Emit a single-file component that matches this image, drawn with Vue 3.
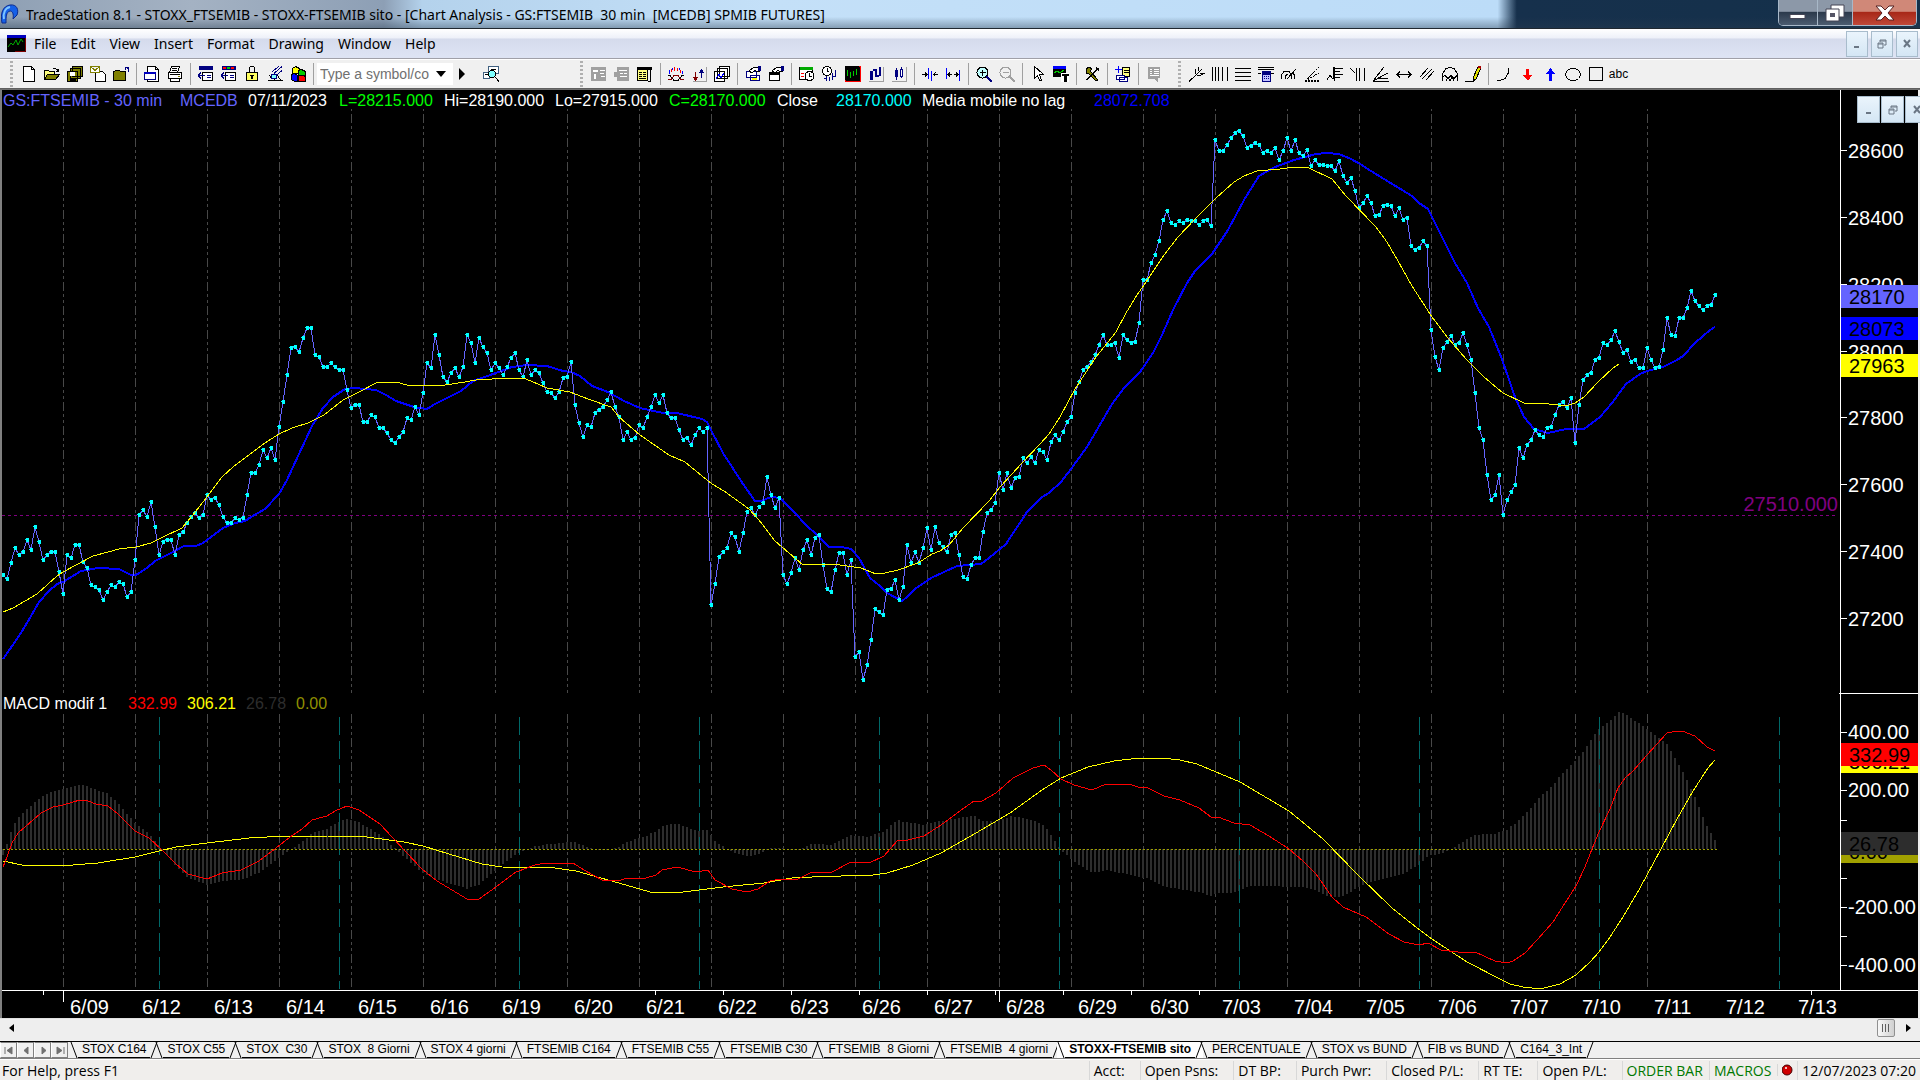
<script setup>
import { ref } from 'vue'

const menus = ['File', 'Edit', 'View', 'Insert', 'Format', 'Drawing', 'Window', 'Help']
const symbol = ref('')

// toolbar icons on a 16x16 grid: [fill, stroke, path]
const K = '#000', N = '#000080', W = '#fff', G = '#a0a0a0', X = 'none'
const icons = {
  newFile: [[W, K, 'M2.5.5h8l3 3v12h-11zM10.5.5v3h3']],
  open: [['#ffff80', K, 'M.5 13.5v-9h4l1 1h5v3'], ['#808000', K, 'M.5 13.5l3-5h12l-4 5z'], [X, K, 'M9 2.5h2l2 1v2M11.5 5.5h3v-3']],
  saveAll: [['#808000', K, 'M5.5.5h10v10h-10zM3.5 2.5h10v10h-10zM.5 5.5h10v10h-10z'], [W, X, 'M3 6h5v4H3z'], [K, X, 'M3 12h6v3H3z']],
  saveNew: [[W, K, 'M5.5 5.5h7l3 3v7h-10z'], [W, '#808000', 'M.5.5h9v6h-9zM.5.5l4.5 4 4.5-4']],
  folderUp: [['#808000', K, 'M.5 14.5v-9h1l1-1h4l1 1h5v9z'], [X, N, 'M15.5 5.5v-3l-3-1M11.5 1.5h4M12.5.5v3']],
  sheet: [[W, K, 'M3.5.5h8l3 3v12h-11zM11.5.5v3h3'], [W, N, 'M.5 6.5h11v7H.5z'], ['#0000c0', X, 'M0 6h12v2H0z']],
  print: [[W, K, 'M4.5.5h8l-2 6h-8zM1.5 6.5h13v6h-13zM3.5 12.5h9v3h-9z'], [X, K, 'M5 2.5h5M5 4.5h5M3 8.5h10'], ['#808000', X, 'M11 10h2v1h-2z']],
  barTop: [[N, X, 'M1 0h14v4H1z'], [W, K, 'M4.5 6.5h10v8h-10z'], [X, N, 'M0 9.5h7M0 9.5l3-3M0 9.5l3 3M9 9.5h4M9 11.5h4']],
  barColor: [[N, X, 'M1 0h14v4H1z'], ['#f00', X, 'M2 1h3v2H2z'], ['#0c0', X, 'M6 1h3v2H6z'], ['#f00', X, 'M10 1h3v2h-3z'], [W, K, 'M4.5 6.5h10v8h-10z'], [X, N, 'M0 9.5h7M0 9.5l3-3M0 9.5l3 3M9 9.5h4M9 11.5h4']],
  lock: [[X, K, 'M5.5 6v-4l1-1.5h3l1 1.5v4'], ['#ffff60', K, 'M2.5 6.5h11v8h-11z'], [K, X, 'M7 9h2v4H7zM6 9h4v1H6z']],
  satellite: [[W, K, 'M.5 14.5h15M2.5 12.5l4-4M13.5 14l-4-6M2 9.5l6 4'], ['#80ffff', N, 'M4.5 8.5h5v4h-5z'], [X, N, 'M7 7.5l8-7M5 5.5l7-5M9 9.5l6-5']],
  cubes: [['#ff0', K, 'M2.5 2.5l3-2 4 2v5h-7z'], ['#0c0', K, 'M8.5 4.5l3-1 4 2v5h-7z'], ['#00f', K, 'M1.5 8.5l3-1 3 2v6h-3l-3-2z'], ['#f00', K, 'M8.5 9.5h5l2 1v5h-7z']],
  lookup: [[W, '#406080', 'M5.5.5h10v7h-10zM.5 6.5h6v6h-6z'], ['#80ffff', K, 'M5.5 8a3.5 3.5 0 1 0 7 0a3.5 3.5 0 1 0-7 0'], [X, K, 'M12 11l4 4.5M2 8.5h3M8 3.5h5']],
  cellsA: [[G, X, 'M0 1h15v14H0z'], [W, X, 'M2 4h5v2H2zM9 4h5v1H9zM9 7h4v1H9zM10 10h4v1h-4zM3 8h2v5H3z']],
  cellsB: [[G, X, 'M3 1h12v14H3zM0 6h6v5H0z'], [W, X, 'M5 4h8v1H5zM6 7h3v1H6zM10 7h3v1h-3zM6 10h7v1H6z']],
  dataWin: [['#ffff80', K, 'M.5 2.5h10v12H.5z'], [K, X, 'M0 1h15v3H0zM2 6h3v1H2zM6 6h3v1H6zM2 8h3v1H2zM6 8h3v1H6zM2 10h3v1H2zM6 10h3v1H6zM2 12h7v1H2z'], [X, K, 'M13.5 3v12h-3']],
  analysis: [[X, '#f00', 'M3.5 6V3M6.5 5V1M9.5 5V2M12.5 7V4'], [X, '#00f', 'M1.5 8V4M4.5 4V2M11.5 4V2M14.5 8V5'], [X, '#800000', 'M0 13.5h3l3-4h4l3 4h3'], [X, K, 'M0 9.5h2l4 5h4l4-5h2']],
  arrows: [['#800000', '#800000', 'M4.5 6v7M2.5 11.5h4l-2 3z'], [N, N, 'M10.5 12V4M8.5 6.5h4l-2-3z'], [X, G, 'M15.5 1v14.5H2']],
  stack: [[W, K, 'M5.5.5h10v10h-10zM3.5 2.5h10v10h-10zM.5 5.5h10v10H.5z'], [X, '#00f', 'M2 13l3-5 2 4 3-5']],
  handA: [[W, N, 'M1.5 5.5h10v6h-10zM5.5 9.5h9v5h-9z'], [W, K, 'M4 5l5-4h6v4l-3 1-2-2-3 3z'], ['#ff0', X, 'M7 12h5v2H7z'], [N, X, 'M13 0h3v5h-3z']],
  handB: [[W, K, 'M1.5 6.5h10v8h-10z'], [K, X, 'M1 6h11v3H1z'], [W, K, 'M4 5l5-4h6v4l-3 1-2-2-3 3z'], [N, X, 'M13 0h3v5h-3z']],
  calClock: [[W, K, 'M.5 1.5h13v12H.5z'], ['#0a0', X, 'M1 1h13v3H1z'], [X, '#f00', 'M2 7h3M2 10h3'], [W, K, 'M6 10a4.5 4.5 0 1 0 9 0a4.5 4.5 0 1 0-9 0M10.5 7v3h2']],
  clockBars: [[W, K, 'M.5 5a4.5 4.5 0 1 0 9 0a4.5 4.5 0 1 0-9 0M5 2v3h2'], [X, N, 'M4.5 10v5M7.5 11v4M10.5 7v7M13.5 4v7M2 12.5h3M11 10.5h3']],
  chartDark: [[K, '#f00', 'M.5.5h15v15H.5z'], [K, X, 'M0 0h14v14H0z'], [X, '#0c0', 'M2.5 4v6M5.5 6v6M8.5 5v5M11.5 3v6']],
  barsUp: [[N, X, 'M2 5h3v9H2zM5 3h3v2H5zM7 3h2v8H7zM9 9h2v2H9zM11 1h2v9h-2z'], [X, G, 'M15.5 1v14.5H1']],
  candles: [[N, X, 'M5 2h1v12H5zM4 4h3v7H4zM10 1h1v11h-1z'], [W, N, 'M9.5 3.5h2v7h-2z'], [X, G, 'M15.5 1v14.5H1']],
  squeeze: [[X, '#00f', 'M6.5 2v11M9.5 5v10'], [X, K, 'M0 8.5h5M3 6.5l2 2-2 2M16 8.5h-4M13.5 6.5l-2 2 2 2']],
  expand: [[X, '#00f', 'M1.5 2v11M14.5 4v11'], [X, K, 'M3 8.5h4M5 6.5l-2 2 2 2M13 8.5H9M11 6.5l2 2-2 2']],
  zoomIn: [['#c0ffff', K, 'M1 6.5a5.5 5.5 0 1 0 11 0a5.5 5.5 0 1 0-11 0'], [X, K, 'M3.5 6.5h6M6.5 3.5v6'], [N, N, 'M10 11l1-1 5 5-1 1z']],
  zoomOut: [[X, G, 'M1 6.5a5.5 5.5 0 1 0 11 0a5.5 5.5 0 1 0-11 0M3.5 6.5h6'], [G, G, 'M10 11l1-1 5 5-1 1z']],
  pointer: [[W, K, 'M4.5.5v12l3-3 2 5h2l-2-6h4z']],
  chartText: [[K, X, 'M0 0h13v11H0z'], ['#0000ff', X, 'M0 0h13v3H0z'], [X, '#0c0', 'M1 7l3-2 3 2 4-3'], [W, X, 'M8 7h8v9H8z'], [K, X, 'M9 8h7v2H9zM11 9h3v7h-3z']],
  hammer: [['#808000', K, 'M2 3l3-2 3 2-2 2 8 9-2 1-8-8-2 1z'], [X, K, 'M14.5 2l-12 12M12 1l3 4']],
  addSheet: [[X, '#00f', 'M3.5 0v7M0 3.5h7'], ['#ffff80', K, 'M7.5 1.5h7v9h-7z'], [X, K, 'M9 4.5h5M9 6.5h5'], [W, N, 'M1.5 9.5h8v4h-8zM4.5 11.5h8v4h-8z']],
  note: [[G, X, 'M2 1h12v11h-2v4l-4-3H2z'], [W, X, 'M4 3h2v1H4zM8 3h5v1H8zM4 5h2v1H4zM8 5h5v1H8zM4 7h2v1H4zM8 7h5v1H8zM4 9h9v1H4z']],
  fork: [[X, K, 'M0 15.5L8 8M8 8l5-5M6 3v4l2 2h4l4-2M9 1v4M11 7h4']],
  vlines: [[X, K, 'M.5 1v14M3.5 1v14M6.5 1v14M10.5 1v14M15.5 1v14']],
  hlines: [[X, K, 'M0 2.5h16M0 6.5h16M0 10.5h16M0 14.5h16']],
  calc: [[X, K, 'M0 1.5h16M0 3.5h16M0 7.5h3M13 7.5h3'], ['#c0c0ff', N, 'M4.5 5.5h8v10h-8z'], [N, X, 'M5 6h7v3H5zM6 10h1v1H6zM8 10h1v1H8zM10 10h1v1h-1zM6 12h1v1H6zM8 12h1v1H8zM10 12h1v1h-1z']],
  arcs: [[X, K, 'M.5 13V9l3-4h4l3 4v4M4.5 13v-3l2-2M6 13L15 3M13.5 13V9l-2-2']],
  fanDot: [['dash', K, 'M1 15L15 1M1 15L15 7M1 15h14M4 14.5h11']],
  retrace: [[X, K, 'M0 14l3-5 3 4 1-12M7.5 1v14M8 2.5h8M8 5.5h5M8 8.5h8M8 11.5h5']],
  timeLines: [[X, K, 'M0 2l5 5M6.5 2v13M9.5 2v13M14.5 2v13']],
  fan: [[X, K, 'M0 15L11 1M0 15L15 7M0 15.5h16M5 12.5h10']],
  hArrow: [[X, K, 'M1 8.5h14M4 5.5l-3 3 3 3M12 5.5l3 3-3 3']],
  parallels: [[X, K, 'M1 11l8-9M3 13L13 3M7 14l8-9']],
  cycles: [[X, K, 'M.5 15V8l3-5 4-1.5h1l4 1.5 3 5v7M4 15l2-4 2 4M8 15l2-4 2 4M0 11.5l3-2 3 3 3-3 3 3 3-3']],
  pencil: [['#e0e000', K, 'M8 12l5-11 3 1-5 11-3 2z'], ['#a00', X, 'M13 0h3v3l-3-1z'], [X, K, 'M0 15.5h9']],
  arc: [[X, K, 'M1 14.5h3l5-2 3-5V2']],
  down: [['#f00', X, 'M7 3h3v6h3l-4 6-5-6h3z']],
  up: [['#00f', X, 'M7 15h3V8h3L8.5 2 4 8h3z']],
  circle: [[X, K, 'M5.5 2.5h5l3 2 2 3v2l-2 3-3 2h-5l-3-2-2-3v-2l2-3z']],
  rect: [[X, K, 'M1.5 1.5h13v13h-13z']]
}

// '|' draws a separator
const fileTools = 'newFile open saveAll saveNew folderUp | sheet print | barTop barColor lock satellite cubes |'.split(' ')
const chartTools = 'cellsA cellsB dataWin | analysis arrows stack | handA handB | calClock clockBars chartDark barsUp candles | squeeze expand | zoomIn zoomOut | pointer chartText | hammer | addSheet | note'.split(' ')
const drawTools = 'fork vlines hlines calc arcs fanDot retrace timeLines fan hArrow parallels cycles pencil | arc down up circle rect'.split(' ')

// close of every 30 min bar, one bar each 4 units
const closes = [
  575, 579, 563, 548, 555, 552, 540, 550, 527, 542, 560, 555, 552, 552, 572, 594, 555, 558, 545, 545,
  562, 568, 585, 587, 590, 600, 592, 585, 587, 582, 584, 597, 592, 560, 515, 510, 517, 502, 527, 555,
  542, 540, 540, 555, 535, 532, 523, 517, 513, 518, 515, 495, 500, 498, 505, 517, 523, 523, 518, 520,
  518, 495, 473, 473, 465, 450, 458, 448, 460, 427, 402, 375, 348, 347, 352, 338, 328, 328, 355, 357,
  367, 367, 363, 367, 370, 370, 390, 408, 405, 405, 422, 422, 415, 417, 428, 428, 433, 440, 443, 437,
  432, 418, 420, 407, 415, 393, 363, 368, 335, 355, 377, 382, 373, 368, 377, 367, 335, 343, 363, 338,
  347, 353, 370, 363, 368, 375, 367, 358, 353, 370, 377, 360, 375, 370, 373, 383, 392, 393, 398, 392,
  378, 377, 362, 405, 423, 437, 425, 427, 413, 410, 407, 400, 392, 407, 417, 440, 432, 440, 438, 425,
  428, 417, 407, 395, 403, 395, 413, 418, 418, 430, 440, 438, 445, 435, 428, 432, 428, 605, 584, 557,
  552, 548, 533, 537, 552, 533, 512, 508, 515, 507, 503, 477, 495, 508, 498, 575, 584, 573, 558, 570,
  550, 540, 555, 538, 535, 565, 589, 592, 570, 553, 553, 575, 560, 657, 652, 680, 665, 640, 609, 612,
  615, 590, 589, 580, 600, 587, 545, 563, 552, 563, 548, 528, 550, 527, 543, 547, 552, 535, 533, 555,
  577, 579, 565, 558, 558, 532, 513, 510, 503, 473, 490, 473, 488, 478, 477, 458, 463, 457, 463, 450,
  452, 460, 442, 435, 440, 432, 422, 417, 393, 382, 370, 367, 362, 355, 345, 335, 345, 345, 343, 358,
  335, 340, 343, 342, 323, 280, 280, 263, 255, 241, 220, 211, 223, 225, 221, 223, 220, 221, 221, 225,
  221, 220, 226, 140, 151, 151, 145, 138, 133, 131, 136, 148, 146, 143, 145, 153, 151, 153, 148, 160,
  151, 138, 151, 140, 153, 156, 150, 166, 160, 165, 165, 166, 166, 171, 161, 176, 183, 178, 191, 208,
  203, 196, 203, 216, 215, 206, 205, 206, 216, 208, 220, 218, 246, 250, 248, 241, 246, 330, 357, 370,
  348, 342, 336, 345, 343, 333, 345, 360, 393, 428, 440, 475, 500, 495, 475, 515, 500, 492, 485, 448,
  458, 445, 440, 430, 435, 437, 428, 427, 415, 405, 402, 408, 398, 443, 405, 380, 375, 373, 360, 358,
  343, 345, 340, 331, 342, 353, 350, 362, 360, 368, 368, 348, 360, 368, 367, 350, 318, 335, 336, 318,
  318, 308, 291, 301, 306, 310, 306, 305, 295
]
const barX = (i) => 3 + i * 4
const closeLine = closes.map((y, i) => `${barX(i)},${y}`).join(' ')
const closeDots = closes.map((y, i) => `M${barX(i) - 1} ${y - 2}h3v4h-3v-2h-1v-1h1z`).join('')

const fastAverage = '3,659 19,636 27,623 39,602 49,591 57,584 63,582 81,571 98,568 119,569 131,575 136,575 147,568 155,561 171,553 184,546 196,546 203,543 223,528 235,523 245,521 251,517 265,509 279,494 287,480 299,454 312,426 323,408 333,397 345,389 355,388 376,390 386,395 396,401 414,407 427,409 435,404 461,391 473,381 496,373 512,367 527,365 547,366 563,371 571,372 580,376 592,386 608,392 624,401 640,408 663,413 677,413 702,419 707,422 712,432 723,453 743,484 755,501 761,501 771,497 780,498 796,514 804,523 819,537 829,547 842,547 851,549 859,558 870,578 880,586 887,593 902,601 907,597 915,589 931,578 957,566 981,564 989,558 1006,544 1027,512 1042,497 1049,493 1061,482 1071,469 1087,447 1112,404 1124,388 1140,372 1153,353 1162,335 1173,310 1187,283 1195,271 1212,254 1228,230 1244,200 1259,176 1275,167 1294,160 1316,154 1326,153 1339,154 1351,159 1360,164 1371,171 1384,179 1412,196 1419,203 1428,209 1441,235 1455,263 1467,283 1478,308 1489,327 1500,354 1505,368 1515,397 1524,417 1534,429 1548,433 1566,429 1584,429 1600,417 1612,403 1626,384 1640,374 1647,371 1663,367 1677,360 1683,356 1695,343 1710,330 1715,327'
const slowAverage = '3,612 13,608 37,594 57,576 63,572 76,565 93,556 108,552 119,549 136,547 151,543 163,537 182,528 192,516 207,497 222,477 233,467 249,455 265,443 279,434 292,428 308,423 324,415 343,400 359,392 376,383 388,382 396,382 407,385 445,385 465,382 476,380 508,378 523,378 531,381 547,388 570,392 588,399 611,407 619,417 640,435 669,455 685,462 702,476 712,484 724,491 749,509 759,520 775,541 803,565 812,564 840,565 861,568 876,574 885,573 898,570 918,563 932,554 940,551 949,545 963,528 989,501 1000,487 1022,463 1040,444 1049,434 1060,417 1075,389 1096,357 1116,332 1126,313 1137,295 1144,285 1164,255 1178,237 1196,218 1216,198 1234,182 1244,176 1257,171 1280,169 1294,167 1309,168 1332,179 1346,196 1376,227 1387,242 1398,261 1412,286 1432,317 1448,338 1466,359 1484,377 1503,393 1524,403 1541,403 1566,406 1575,403 1584,397 1598,382 1613,368 1619,364'
const macd = '3,867 7,857 12,843 18,833 41,813 53,807 63,805 80,800 88,801 96,804 108,806 118,814 135,831 149,838 162,850 176,864 188,874 207,879 222,873 241,870 259,861 276,848 290,837 302,829 312,820 327,816 335,811 347,806 359,810 380,824 392,837 406,852 422,869 437,881 467,899 479,899 496,887 516,872 535,865 545,863 573,863 584,870 602,880 618,881 627,878 646,878 656,875 662,870 677,867 696,872 708,870 715,880 732,889 747,892 758,889 770,881 780,879 798,879 812,872 832,872 851,862 869,863 884,856 898,840 904,841 924,836 941,825 964,808 974,801 982,801 996,793 1013,778 1033,768 1044,765 1051,770 1061,779 1074,785 1092,790 1106,784 1129,784 1138,787 1148,788 1164,796 1180,800 1199,808 1211,817 1218,817 1234,823 1250,825 1269,836 1289,849 1303,861 1316,874 1332,897 1343,907 1366,917 1389,934 1404,942 1419,945 1428,943 1441,950 1458,952 1475,952 1495,961 1507,963 1513,961 1525,953 1537,940 1553,922 1565,903 1576,886 1585,867 1592,849 1599,832 1610,809 1618,788 1625,778 1633,771 1647,755 1667,733 1677,731 1682,731 1695,736 1707,747 1715,751'
const signal = '3,861 22,865 73,865 98,863 135,857 159,851 176,847 207,843 249,838 286,836 327,836 367,837 404,842 423,846 449,854 482,864 502,867 555,868 576,871 608,880 640,889 650,892 666,893 683,892 723,887 764,883 792,878 812,877 841,876 873,875 887,873 913,865 941,853 976,833 1010,813 1042,790 1061,778 1088,767 1114,761 1131,759 1162,758 1180,760 1197,764 1240,782 1289,811 1323,839 1358,875 1392,908 1412,924 1432,939 1467,962 1500,979 1510,984 1523,987 1540,989 1560,984 1576,975 1590,962 1599,952 1608,940 1623,917 1640,888 1661,849 1677,819 1693,791 1708,768 1715,760'

const valueAt = (line, x) => {
  const pts = line.split(' ').map(p => p.split(',').map(Number))
  const n = Math.max(1, pts.findIndex(p => p[0] >= x))
  const [a, b] = [pts[n - 1], pts[n]]
  return a[1] + (b[1] - a[1]) * (x - a[0]) / (b[0] - a[0])
}
// histogram = macd - signal, around the zero line
const histogram = closes.map((_, i) => {
  const x = barX(i)
  return `M${x - 1} 849h2v${Math.round(valueAt(macd, x) - valueAt(signal, x))}h-2z`
}).join('')

const days = ['6/09', '6/12', '6/13', '6/14', '6/15', '6/16', '6/19', '6/20', '6/21', '6/22', '6/23', '6/26', '6/27', '6/28', '6/29', '6/30', '7/03', '7/04', '7/05', '7/06', '7/07', '7/10', '7/11', '7/12', '7/13']
const cycles = Array.from({ length: 10 }, (_, i) => 159 + i * 180)
const dayTicks = [43, 655, 723, 791, 859, 927, 995, 1063, 1131, 1199, 1811]

const prices = [[28600, 150], [28400, 217], [28200, 284], [28000, 351], [27800, 417], [27600, 484], [27400, 551], [27200, 618]]
const levels = [['400.00', 732], ['200.00', 790], ['', 820], ['', 878], ['-200.00', 907], ['', 936], ['-400.00', 965]]
const tags = [
  ['28170', 285, '#6464ff'], ['28073', 317, '#0000ff'], ['27963', 354, '#ffff00'],
  ['306.21', 750, '#ffff00'], ['332.99', 743, '#ff0000'], ['0.00', 840, '#a0a000'], ['26.78', 832, '#2d2d2d']
]
const legend = [
  ['GS:FTSEMIB - 30 min', 3, '#6464ff'], ['MCEDB', 180, '#6464ff'], ['07/11/2023', 248, '#fff'], ['L=28215.000', 339, '#0f0'],
  ['Hi=28190.000', 444, '#fff'], ['Lo=27915.000', 555, '#fff'], ['C=28170.000', 669, '#0f0'], ['Close', 777, '#fff'],
  ['28170.000', 836, '#0ff'], ['Media mobile no lag', 922, '#fff'], ['28072.708', 1094, '#00f']
]
const macdLegend = [['MACD modif 1', 3, '#fff'], ['332.99', 128, '#f00'], ['306.21', 187, '#ff0'], ['26.78', 246, '#2d2d2d'], ['0.00', 296, '#909000']]

const sheets = ['STOX C164', 'STOX C55', 'STOX  C30', 'STOX  8 Giorni', 'STOX 4 giorni', 'FTSEMIB C164', 'FTSEMIB C55', 'FTSEMIB C30', 'FTSEMIB  8 Giorni', 'FTSEMIB  4 giorni', 'STOXX-FTSEMIB sito', 'PERCENTUALE', 'STOX vs BUND', 'FIB vs BUND', 'C164_3_Int']
const activeSheet = ref('STOXX-FTSEMIB sito')
const navs = [['First', 'M4 4v7M11 4v7L6 7.5z'], ['Previous', 'M10 4v7L6 7.5z'], ['Next', 'M7 4v7l4-3.5z'], ['Last', 'M12 4v7M5 4v7l5-3.5z']]
const status = ['Acct:', 'Open Psns:', 'DT BP:', 'Purch Pwr:', 'Closed P/L:', 'RT TE:', 'Open P/L:']
</script>

<template>
  <div class="window">
    <header class="titlebar">
      <svg class="logo" width="18" height="20" viewBox="0 0 18 20" aria-hidden="true">
        <path d="M1 19C-1 9 2 2 9 1c7-1 9 5 7 10l-4 4c1-6-1-8-3-8-4 1-4 6-4 12z" fill="#1560e8" stroke="#0a2a90" />
        <path d="M3 15C2 9 4 4 9 3" fill="none" stroke="#7fc4ff" stroke-width="2" />
      </svg>
      <h1>TradeStation 8.1 - STOXX_FTSEMIB - STOXX-FTSEMIB sito - [Chart Analysis - GS:FTSEMIB&nbsp; 30 min&nbsp; [MCEDB] SPMIB FUTURES]</h1>
      <div class="caption">
        <button aria-label="Minimize"><svg width="18" height="16"><path d="M1 9.5h15v4H1z" fill="#fff" stroke="#445" /></svg></button>
        <button aria-label="Restore"><svg width="20" height="18"><path d="M6 1h13v12H6z" fill="#fff" stroke="#445" /><path d="M1 5h13v12H1z" fill="#fff" stroke="#445" /><path d="M5 9h5v4H5z" fill="#556" /></svg></button>
        <button class="close" aria-label="Close"><svg width="20" height="16"><path d="M1 1h5l4 4 4-4h5l-6 7 6 7h-5l-4-4-4 4H1l6-7z" fill="#fff" stroke="#522" /></svg></button>
      </div>
    </header>

    <nav class="menubar">
      <svg class="doc" width="19" height="17" aria-hidden="true">
        <path d="M0 0h19v17H0z" fill="#000" /><path d="M0 0h19v3H0z" fill="#0000c0" />
        <path d="M1 12l3-4 2 2 3-5 2 5 3-6 2 3" fill="none" stroke="#0a0" /><path d="M18.5 3v13.5H8" fill="none" stroke="#800000" />
      </svg>
      <button v-for="m in menus" :key="m" class="menu">{{ m }}</button>
      <div class="mdi">
        <button aria-label="Minimize chart"><svg width="12" height="12"><path d="M3 8h5v2H3z" fill="#6a7684" /></svg></button>
        <button aria-label="Restore chart"><svg width="12" height="12"><path d="M4 2h6v5H8M4 2v2M2 5h5v5H2zM2 6h5M4 3h6" fill="none" stroke="#6a7684" /></svg></button>
        <button aria-label="Close chart"><svg width="12" height="12"><path d="M3 2l6 7M9 2L3 9" stroke="#6a7684" stroke-width="2" /></svg></button>
      </div>
    </nav>

    <div class="toolbar">
      <div class="tools">
        <i class="grip"></i>
        <template v-for="(t, i) in fileTools" :key="i">
          <i v-if="t === '|'" class="sep"></i>
          <button v-else class="tool" :aria-label="t"><svg viewBox="0 0 16 16"><path v-for="(p, n) in icons[t]" :key="n" :fill="p[0]" :stroke="p[1]" :d="p[2]" /></svg></button>
        </template>
        <div class="combo">
          <input v-model="symbol" placeholder="Type a symbol/co" aria-label="Symbol">
          <button aria-label="Symbol list"><svg width="12" height="8"><path d="M1 1h10L6 7z" /></svg></button>
        </div>
        <button class="go" aria-label="Go"><svg width="6" height="12"><path d="M0 0l6 6-6 6z" /></svg></button>
        <button class="tool" aria-label="Symbol lookup"><svg viewBox="0 0 16 16"><path v-for="(p, n) in icons.lookup" :key="n" :fill="p[0]" :stroke="p[1]" :d="p[2]" /></svg></button>
      </div>
      <div class="tools charting">
        <i class="grip"></i>
        <template v-for="(t, i) in chartTools" :key="i">
          <i v-if="t === '|'" class="sep"></i>
          <button v-else class="tool" :aria-label="t"><svg viewBox="0 0 16 16"><path v-for="(p, n) in icons[t]" :key="n" :fill="p[0]" :stroke="p[1]" :d="p[2]" /></svg></button>
        </template>
      </div>
      <div class="tools drawing">
        <i class="grip"></i>
        <template v-for="(t, i) in drawTools" :key="i">
          <i v-if="t === '|'" class="sep"></i>
          <button v-else class="tool" :aria-label="t"><svg viewBox="0 0 16 16"><path v-for="(p, n) in icons[t]" :key="n" :class="{ dotted: p[0] === 'dash' }" :fill="p[0] === 'dash' ? 'none' : p[0]" :stroke="p[1]" :d="p[2]" /></svg></button>
        </template>
        <button class="tool abc">abc</button>
      </div>
    </div>

    <main class="chart">
      <svg class="plot" viewBox="2 90 1916 928">
        <g class="crisp">
          <!-- session breaks -->
          <template v-for="(d, i) in days" :key="d">
            <template v-if="i < 23">
              <path class="session" stroke-dashoffset="19" :d="`M${63.5 + i * 72} 109V693`" />
              <path class="session" :d="`M${63.5 + i * 72} 714V987`" />
            </template>
          </template>
          <path class="histogram" :d="histogram" />
          <path v-for="x in cycles" :key="x" class="cycle" :d="`M${x + 0.5} 717V989`" />
          <path class="zero" d="M3 849.5H1717" />
          <path class="support" d="M2 515.5H1836" />

          <polyline class="fast" :points="fastAverage" />
          <polyline class="line" stroke="#6464ff" :points="closeLine" />
          <path fill="#00ffff" :d="closeDots" />
          <polyline class="line" stroke="#ffff00" :points="slowAverage" />
          <polyline class="line" stroke="#ffff00" :points="signal" />
          <polyline class="line" stroke="#ff0000" :points="macd" />

          <!-- axes -->
          <path class="axis" d="M1840.5 90V990M1839 693.5H1918M2 990.5H1918M63.5 990V1002M999.5 990V1002" />
          <path v-for="x in dayTicks" :key="x" class="axis" :d="`M${x + 0.5} 990v5`" />
          <path v-for="p in prices" :key="p[0]" class="axis" :d="`M1841 ${p[1] + 0.5}h6`" />
          <path v-for="l in levels" :key="l[1]" class="axis" :d="`M1841 ${l[1] + 0.5}h6`" />
        </g>

        <g class="scale">
          <text v-for="p in prices" :key="p[0]" x="1848" :y="p[1] + 8">{{ p[0] }}</text>
          <text v-for="l in levels" :key="l[1]" x="1848" :y="l[1] + 7">{{ l[0] }}</text>
          <text v-for="(d, i) in days" :key="d" :x="70 + i * 72" y="1014">{{ d }}</text>
          <text class="level" x="1838" y="511">27510.000</text>
          <g v-for="t in tags" :key="t[0]">
            <rect x="1841" :y="t[1]" width="77" height="23" :fill="t[2]" />
            <text class="tag" x="1849" :y="t[1] + 19">{{ t[0] }}</text>
          </g>
        </g>
        <g class="legend">
          <text v-for="l in legend" :key="l[1]" :x="l[1]" y="106" :fill="l[2]">{{ l[0] }}</text>
          <text v-for="l in macdLegend" :key="l[1]" :x="l[1]" y="709" :fill="l[2]">{{ l[0] }}</text>
        </g>
      </svg>
      <div class="mdi floating">
        <button aria-label="Minimize window"><svg width="12" height="12"><path d="M3 8h5v2H3z" fill="#6a7684" /></svg></button>
        <button aria-label="Restore window"><svg width="12" height="12"><path d="M4 2h6v5H8M4 2v2M2 5h5v5H2zM2 6h5M4 3h6" fill="none" stroke="#6a7684" /></svg></button>
        <button aria-label="Close window"><svg width="12" height="12"><path d="M3 2l6 7M9 2L3 9" stroke="#6a7684" stroke-width="2" /></svg></button>
      </div>
    </main>

    <div class="scrollbar">
      <button aria-label="Scroll left"><svg width="5" height="8"><path d="M5 0v8L0 4z" /></svg></button>
      <div class="track"><span class="thumb"></span></div>
      <button aria-label="Scroll right"><svg width="5" height="8"><path d="M0 0v8l5-4z" /></svg></button>
    </div>

    <div class="sheets">
      <button v-for="n in navs" :key="n[0]" class="nav" :aria-label="n[0]"><svg width="15" height="15"><path :d="n[1]" fill="#707070" stroke="#707070" /></svg></button>
      <div class="tabs">
        <button
          v-for="s in sheets"
          :key="s"
          class="sheet"
          :class="{ active: s === activeSheet }"
          @click="activeSheet = s"
        >
          <svg class="edge" width="8" height="16" viewBox="0 0 8 16"><path class="ink" d="M1 0l6 16" /></svg>
          <span>{{ s }}</span>
          <svg class="edge" width="8" height="16" viewBox="0 0 8 16"><path class="ink" d="M7 0L1 16" /></svg>
        </button>
      </div>
    </div>

    <footer class="status">
      <span class="help">For Help, press F1</span>
      <span v-for="s in status" :key="s" class="cell">{{ s }}</span>
      <button class="cell link">ORDER BAR</button>
      <button class="cell link">MACROS</button>
      <span class="cell light"><svg width="11" height="12"><circle cx="5" cy="6" r="5" fill="#d00000" stroke="#400" /><circle cx="4" cy="4" r="1" fill="#fff" /></svg></span>
      <span class="cell clock">12/07/2023 07:20</span>
    </footer>
    <div class="desktop"></div>
  </div>
</template>

<style>
body { margin: 0; background: #f0f0f0; }
</style>

<style scoped>
.window { display: flex; flex-direction: column; overflow: hidden; font-family: "Open Sans", "Noto Sans", sans-serif; font-size: 14px; color: #000; background: #f0f0f0; }
button { margin: 0; padding: 0; border: 0; background: none; font: inherit; color: inherit; }
svg { display: block; flex: none; }

/* title bar */
.titlebar {
  display: flex; align-items: center; height: 28px; border-bottom: 1px solid #202830;
  background:
    linear-gradient(rgba(255, 255, 255, 0) 60%, rgba(40, 60, 80, 0.4)),
    linear-gradient(90deg, #8fa0b4 0, #a4b2c3 10%, #8d9fb5 20%, #b4d2ec 22%, #c4e0f8 40%, #bcdcf8 78%, #16304c 79%, #14304a 100%);
}
.logo { margin-left: 1px; }
h1 { flex: 1; min-width: 0; margin: 0 0 0 7px; overflow: hidden; font: 14px "Noto Sans", sans-serif; white-space: nowrap; }
.caption { display: flex; align-self: flex-start; height: 25px; margin-right: 3px; border: 1px solid #a8b8c8; border-top: 0; border-radius: 0 0 5px 5px; overflow: hidden; }
.caption button { display: flex; align-items: center; justify-content: center; width: 38px; background: linear-gradient(#8c98a8 45%, #2c3a4c 50%, #4c5c70); }
.caption button + button { width: 35px; border-left: 1px solid #a8b8c8; }
.caption button.close { width: 64px; background: linear-gradient(#d08878 45%, #a82818 50%, #c04838); }

/* menu */
.menubar { display: flex; align-items: center; height: 29px; padding: 0 2px 0 7px; border-bottom: 1px solid #a0a0a8; background: linear-gradient(#fff, #eef1f9 30%, #d5dbec 35%, #dde3f3 90%); }
.doc { margin-right: 8px; }
.menu { margin-right: 14px; font-family: "Noto Sans", sans-serif; }
.mdi { display: flex; gap: 3px; margin-left: auto; }
.mdi button { display: flex; align-items: center; justify-content: center; width: 22px; height: 26px; border: 1px solid #a8bccc; background: linear-gradient(#eaf4fc, #d4e6f4); }

/* toolbar */
.toolbar { display: flex; align-items: center; height: 28px; border-top: 1px solid #fff; border-bottom: 1px solid #606060; background: #f0f0f0; }
.tools { display: flex; align-items: center; }
.charting { margin-left: 78px; }
.drawing { margin-left: 13px; }
.grip { width: 3px; height: 26px; margin: 0 4px 0 10px; background: repeating-linear-gradient(#b0b0b0 0 2px, #f0f0f0 2px 4px); }
.charting .grip, .drawing .grip { margin-left: 0; }
.sep { width: 1px; height: 22px; margin: 0 3px 0 4px; background: #a0a0a0; }
.tool { display: flex; align-items: center; justify-content: center; width: 23px; height: 24px; }
.tool svg { width: 16px; height: 16px; shape-rendering: crispEdges; }
.dotted { stroke-dasharray: 2 1; }
.abc { font: 12px "Liberation Sans", sans-serif; }
.combo { display: flex; align-items: center; width: 136px; height: 22px; background: #fff; }
.combo input { flex: 1; min-width: 0; padding: 0 3px; border: 0; background: none; font: 14px "Liberation Sans", sans-serif; }
.combo input::placeholder { color: #707070; opacity: 1; }
.combo button { width: 18px; }
.go { width: 18px; margin-right: 8px; padding-left: 6px; }

/* chart */
.chart { position: relative; padding: 0 2px; border-top: 1px solid #707070; background: linear-gradient(90deg, #808080 2px, #f0f0f0 2px); }
.plot { width: 100%; height: auto; background: #000; }
.crisp { shape-rendering: crispEdges; }
.session { stroke: #484848; stroke-dasharray: 9 3 3 3 3 3; }
.cycle { stroke: #006868; stroke-dasharray: 18 6; }
.zero { stroke: #a0a000; stroke-dasharray: 2 2; }
.support { stroke: #800080; stroke-dasharray: 3 3; }
.histogram { fill: #2d2d2d; }
.fast { fill: none; stroke: #0000ff; stroke-width: 2; }
.line { fill: none; }
.axis { fill: none; stroke: #fff; }
.scale { font: 20px "Liberation Sans", sans-serif; fill: #fff; }
.scale .level { fill: #800080; text-anchor: end; }
.scale .tag { fill: #000; }
.legend { font: 16px "Liberation Sans", sans-serif; }
.floating { position: absolute; top: 6px; right: -8px; gap: 1px; }
.floating button { height: 27px; width: 23px; }

/* scrollbar and sheet tabs */
.scrollbar { display: flex; align-items: center; height: 18px; padding: 0 9px 4px; border-top: 1px solid #e0e0e0; background: #eee; }
.track { display: flex; flex: 1; justify-content: flex-end; margin-right: 11px; }
.thumb { width: 18px; height: 18px; box-sizing: border-box; border: 1px solid #909090; border-radius: 2px; background: repeating-linear-gradient(90deg, #606060 0 1px, transparent 1px 3px) 4px 4px / 9px 8px no-repeat, linear-gradient(90deg, #f8f8f8, #d0d0d0); }
.sheets { display: flex; height: 16px; border-top: 1px solid #000; border-bottom: 1px solid #808080; background: #f0f0f0; overflow: hidden; }
.nav { box-sizing: border-box; width: 17px; height: 16px; border: 1px solid #808080; border-left-color: #fff; }
.tabs { display: flex; padding-left: 2px; }
.sheet { display: flex; align-items: center; margin-right: -3px; font: 12px "Liberation Sans", sans-serif; white-space: pre; }
.sheet span { padding: 0 4px; line-height: 15px; border-bottom: 1px solid #000; }
.edge { fill: none; }
.edge .ink { stroke: #000; }
.active { font-weight: 700; background: #fff; }

/* status */
.status { display: flex; align-items: center; height: 20px; border-top: 1px solid #fff; background: #f0eeec; white-space: nowrap; }
.help { flex: 1; padding-left: 2px; }
.cell { padding: 0 15px 0 4px; border-left: 1px solid #d8d8d8; line-height: 19px; }
.cell.link { padding: 0 6px 0 4px; color: #007800; }
.cell.light { padding: 0 4px; }
.cell.clock { padding: 0 4px; }
.desktop { height: 2px; background: #b8cce0; }
</style>
